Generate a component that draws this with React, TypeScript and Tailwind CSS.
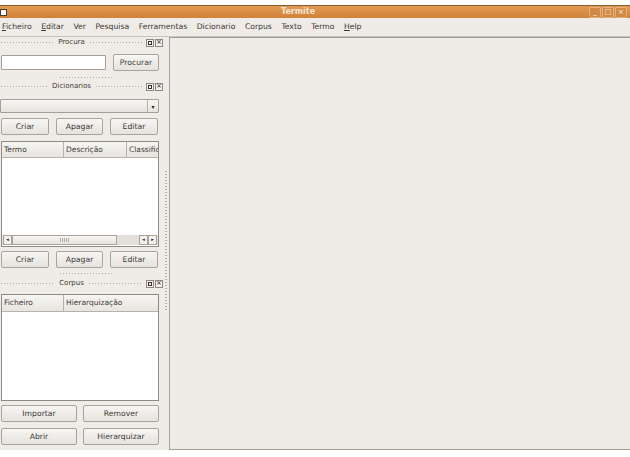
import type { ReactNode } from "react";

const font = { fontFamily: '"DejaVu Sans", "Liberation Sans", sans-serif' };

function Btn({ children, className = "" }: { children: ReactNode; className?: string }) {
  return (
    <div
      className={
        "flex h-[17px] items-center justify-center rounded-[2px] border border-[#a9a39b] bg-gradient-to-b from-[#f7f6f4] to-[#e6e2dd] text-[7.7px] text-[#3d3a36] " +
        className
      }
    >
      {children}
    </div>
  );
}

function Dots({ className = "" }: { className?: string }) {
  return (
    <div
      className={
        "h-[3px] bg-[radial-gradient(circle,#b3aca3_0.7px,transparent_0.9px)] bg-[length:3px_3px] " +
        className
      }
    />
  );
}

function DockTitle({ title }: { title: string }) {
  return (
    <div className="flex h-[11px] items-center">
      <Dots className="flex-1" />
      <span className="px-[4px] text-[7px] leading-none text-[#3d3a36]">{title}</span>
      <Dots className="flex-1" />
      <div className="ml-[3px] flex gap-[1px]">
        <div className="flex h-[8px] w-[8px] items-center justify-center border border-[#8d877f] bg-[#f3f1ee]">
          <div className="h-[4px] w-[4px] border border-[#333]" />
        </div>
        <div className="flex h-[8px] w-[8px] items-center justify-center border border-[#8d877f] bg-[#f3f1ee] text-[7px] leading-none text-[#222]">
          ×
        </div>
      </div>
    </div>
  );
}

function HeaderCell({ children, className = "" }: { children: ReactNode; className?: string }) {
  return (
    <div
      className={
        "flex h-[15px] items-center overflow-hidden whitespace-nowrap border-r border-[#b7b1a9] bg-gradient-to-b from-[#f6f5f3] to-[#e8e4df] pl-[2px] text-[7.5px] text-[#3d3a36] " +
        className
      }
    >
      {children}
    </div>
  );
}

function ButtonRow() {
  return (
    <>
      <Btn className="ml-[1px] w-[48px]">Criar</Btn>
      <Btn className="ml-[7px] w-[47px]">Apagar</Btn>
      <Btn className="ml-[7px] w-[48px]">Editar</Btn>
    </>
  );
}

const menus = [
  { label: "Ficheiro", u: true },
  { label: "Editar", u: true },
  { label: "Ver" },
  { label: "Pesquisa" },
  { label: "Ferramentas" },
  { label: "Dicionario" },
  { label: "Corpus" },
  { label: "Texto" },
  { label: "Termo" },
  { label: "Help", u: true },
];

export default function App() {
  return (
    <div className="flex h-[457px] w-[630px] flex-col overflow-hidden bg-white" style={font}>
      <div className="h-[5px] bg-white" />

      {/* Title bar */}
      <div className="relative flex h-[13px] items-center border-t border-[#8a5a2a] bg-gradient-to-b from-[#e19a52] to-[#cf8138]">
        <div className="h-[7px] w-[7px] border border-[#4a3a2a] bg-white" />
        <div className="absolute left-[281px] top-[0px] text-[8px] font-bold leading-[12px] text-[#f6e6d2]">
          Termite
        </div>
        <div className="ml-auto mr-[3px] flex gap-[1px]">
          {["_", "□", "×"].map((g) => (
            <div
              key={g}
              className="flex h-[11px] w-[12px] items-center justify-center rounded-[1px] border border-[#e3b07c] bg-[#d08a45] text-[7px] leading-none text-[#fbeee0]"
            >
              {g}
            </div>
          ))}
        </div>
      </div>

      {/* Menu bar */}
      <div className="flex h-[19px] items-center gap-[9.5px] border-b border-[#c9c3bb] bg-[#efebe7] pl-[2px] text-[7.7px] text-[#3a3733]">
        {menus.map((m) => (
          <span key={m.label}>
            {m.u ? (
              <>
                <span className="underline">{m.label[0]}</span>
                {m.label.slice(1)}
              </>
            ) : (
              m.label
            )}
          </span>
        ))}
      </div>

      {/* Main */}
      <div className="flex h-[413px] bg-[#efebe7]">
        {/* Left dock area */}
        <div className="flex w-[163px] flex-col">
          <DockTitle title="Procura" />
          <div className="mt-[6px] flex items-center">
            <div className="ml-[1px] h-[15px] w-[105px] rounded-[1px] border border-[#a49e96] bg-white" />
            <Btn className="ml-[7px] w-[46px]">Procurar</Btn>
          </div>
          <div className="mt-[5px] flex justify-center">
            <Dots className="ml-[10px] w-[55px]" />
          </div>
          <div className="mt-[2px]">
            <DockTitle title="Dicionarios" />
          </div>
          <div className="mt-[7px] flex h-[14px] w-[159px] items-stretch rounded-[1px] border border-[#a49e96] bg-gradient-to-b from-[#f7f6f4] to-[#e6e2dd]">
            <div className="flex-1" />
            <div className="flex w-[11px] items-center justify-center border-l border-[#b7b1a9] text-[6px] text-[#222]">
              ▾
            </div>
          </div>
          <div className="mt-[5px] flex">
            <ButtonRow />
          </div>
          <div className="ml-[1px] mt-[6px] flex h-[106px] w-[158px] flex-col border border-[#8f8982] bg-white">
            <div className="flex border-b border-[#b7b1a9]">
              <HeaderCell className="w-[62px]">Termo</HeaderCell>
              <HeaderCell className="w-[63px]">Descrição</HeaderCell>
              <HeaderCell className="flex-1 border-r-0">Classific</HeaderCell>
            </div>
            <div className="flex-1" />
            <div className="mb-[1px] flex h-[10px] items-stretch bg-[#e3dfda] px-[1px]">
              <div className="flex w-[9px] items-center justify-center border border-[#a9a39b] bg-[#f3f1ee] text-[5px] text-[#222]">
                ◂
              </div>
              <div className="flex w-[105px] items-center justify-center border border-[#a9a39b] bg-gradient-to-b from-[#f7f6f4] to-[#e6e2dd]">
                <div className="h-[4px] w-[9px] bg-[repeating-linear-gradient(90deg,#b3aca3_0_1px,transparent_1px_2px)]" />
              </div>
              <div className="flex-1" />
              <div className="flex w-[9px] items-center justify-center border border-[#a9a39b] bg-[#f3f1ee] text-[5px] text-[#222]">
                ◂
              </div>
              <div className="flex w-[9px] items-center justify-center border border-[#a9a39b] bg-[#f3f1ee] text-[5px] text-[#222]">
                ▸
              </div>
            </div>
          </div>
          <div className="mt-[4px] flex">
            <ButtonRow />
          </div>
          <div className="mt-[4px] flex justify-center">
            <Dots className="ml-[10px] w-[55px]" />
          </div>
          <div className="mt-[3px]">
            <DockTitle title="Corpus" />
          </div>
          <div className="ml-[1px] mt-[5px] flex h-[107px] w-[158px] flex-col border border-[#8f8982] bg-white">
            <div className="flex border-b border-[#b7b1a9]">
              <HeaderCell className="h-[16px] w-[62px]">Ficheiro</HeaderCell>
              <HeaderCell className="h-[16px] flex-1 border-r-0">Hierarquização</HeaderCell>
            </div>
          </div>
          <div className="mt-[4px] flex">
            <Btn className="ml-[1px] w-[76px]">Importar</Btn>
            <Btn className="ml-[6px] w-[76px]">Remover</Btn>
          </div>
          <div className="mt-[6px] flex">
            <Btn className="ml-[1px] w-[76px]">Abrir</Btn>
            <Btn className="ml-[6px] w-[76px]">Hierarquizar</Btn>
          </div>
        </div>

        {/* Splitter */}
        <div className="flex w-[6px] flex-col items-center">
          <div className="mt-[133px] h-[140px] w-[2px] bg-[radial-gradient(circle,#b3aca3_0.7px,transparent_0.9px)] bg-[length:2px_3px]" />
        </div>

        {/* Central area */}
        <div className="flex-1 border-b border-l border-t border-[#a49e96] bg-[#efebe7]" />
      </div>

      <div className="flex-1 bg-white" />
    </div>
  );
}
